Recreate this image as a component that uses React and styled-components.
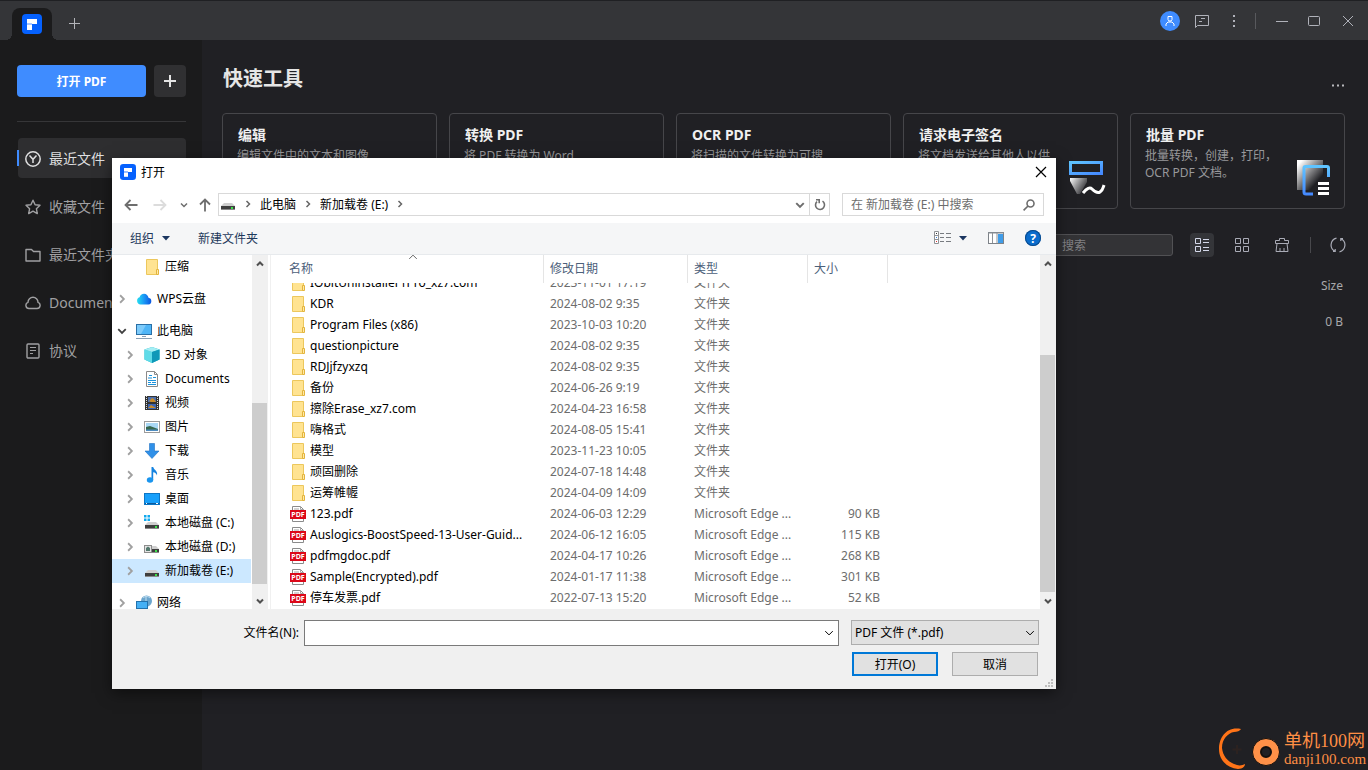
import React, { useLayoutEffect, useRef } from 'react';
import styled, { createGlobalStyle, css } from 'styled-components';

const treeItems = [
  { label: '压缩', icon: 'folder', level: 1, gap: true },
  { label: 'WPS云盘', icon: 'wps', level: 0, arrow: 'right', gap: true },
  { label: '此电脑', icon: 'computer', level: 0, arrow: 'down' },
  { label: '3D 对象', icon: 'cube', level: 1, arrow: 'right' },
  { label: 'Documents', icon: 'doc', level: 1, arrow: 'right' },
  { label: '视频', icon: 'video', level: 1, arrow: 'right' },
  { label: '图片', icon: 'picture', level: 1, arrow: 'right' },
  { label: '下载', icon: 'download', level: 1, arrow: 'right' },
  { label: '音乐', icon: 'music', level: 1, arrow: 'right' },
  { label: '桌面', icon: 'desktop', level: 1, arrow: 'right' },
  { label: '本地磁盘 (C:)', icon: 'driveC', level: 1, arrow: 'right' },
  { label: '本地磁盘 (D:)', icon: 'driveD', level: 1, arrow: 'right' },
  { label: '新加载卷 (E:)', icon: 'drive', level: 1, arrow: 'right', selected: true, gap: true },
  { label: '网络', icon: 'network', level: 0, arrow: 'right' },
];

const files = [
  ['IObitUninstaller1Pro_xz7.com', '2023-11-01 17:19'],
  ['KDR', '2024-08-02 9:35'],
  ['Program Files (x86)', '2023-10-03 10:20'],
  ['questionpicture', '2024-08-02 9:35'],
  ['RDJjfzyxzq', '2024-08-02 9:35'],
  ['备份', '2024-06-26 9:19'],
  ['擦除Erase_xz7.com', '2024-04-23 16:58'],
  ['嗨格式', '2024-08-05 15:41'],
  ['模型', '2023-11-23 10:05'],
  ['顽固删除', '2024-07-18 14:48'],
  ['运筹帷幄', '2024-04-09 14:09'],
  ['123.pdf', '2024-06-03 12:29', '90 KB'],
  ['Auslogics-BoostSpeed-13-User-Guid...', '2024-06-12 16:05', '115 KB'],
  ['pdfmgdoc.pdf', '2024-04-17 10:26', '268 KB'],
  ['Sample(Encrypted).pdf', '2024-01-17 11:38', '301 KB'],
  ['停车发票.pdf', '2022-07-13 15:20', '52 KB'],
];

const menuItems = [
  { label: '最近文件', icon: 'recent', active: true },
  { label: '收藏文件', icon: 'star' },
  { label: '最近文件夹', icon: 'dir' },
  { label: 'Document Cloud', icon: 'cloud' },
  { label: '协议', icon: 'agreement' },
];

const tools = [
  { title: '编辑', text: '编辑文件中的文本和图像' },
  { title: '转换 PDF', text: '将 PDF 转换为 Word Excel PPT 等' },
  { title: 'OCR PDF', text: '将扫描的文件转换为可搜索或可编辑的文本。' },
  { title: '请求电子签名', text: '将文档发送给其他人以供签名。', icon: 'sign' },
  { title: '批量 PDF', text: '批量转换，创建，打印，OCR PDF 文档。', icon: 'batch' },
];

const Logo = ({ size }) => (
  <svg width={size} height={size} viewBox="0 0 20 20" aria-hidden="true">
    <rect width="20" height="20" rx="4" fill="#0561fe" />
    <path d="M5 5h10v5h-5V9H5z" fill="#fff" />
    <path d="M5 9h5v2H5z" fill="#a9c8ff" />
    <path d="M5 11h5v5H5z" fill="#fff" />
  </svg>
);

const Stroke = ({ size = 16, children, width = 1, ...rest }) => (
  <svg width={size} height={size} viewBox={`0 0 ${size} ${size}`} fill="none" stroke="currentColor" strokeWidth={width} aria-hidden="true" {...rest}>
    {children}
  </svg>
);

const Chevron = ({ dir = 'right', size = 8, width = 2 }) => {
  const paths = {
    right: 'M2.5 1l3 3-3 3',
    down: 'M1 2.5l3 3 3-3',
    up: 'M1 5.5l3-3 3 3',
  };
  return (
    <svg width={size} height={size} viewBox="0 0 8 8" fill="none" stroke="currentColor" strokeWidth={(width * 8) / size} aria-hidden="true">
      <path d={paths[dir]} />
    </svg>
  );
};

const Caret = () => (
  <svg width="8" height="5" viewBox="0 0 8 5" aria-hidden="true">
    <path d="M0 0h8L4 4.6z" fill="#1b3660" />
  </svg>
);

const menuIcons = {
  recent: (
    <Stroke width={1.5}>
      <circle cx="8" cy="8" r="7.2" />
      <path d="M4.5 4.5L8 8.3l3.5-3.8M8 8v4" />
    </Stroke>
  ),
  star: (
    <Stroke width={1.4}>
      <path d="M8 1.2l2.1 4.5 4.9.6-3.6 3.4.9 4.9L8 12.2l-4.3 2.4.9-4.9L1 6.3l4.9-.6z" strokeLinejoin="round" />
    </Stroke>
  ),
  dir: (
    <Stroke width={1.4}>
      <path d="M1 2.5h5.500l2 2H15v9.500H1z" strokeLinejoin="round" />
    </Stroke>
  ),
  cloud: (
    <Stroke width={1.4}>
      <path d="M4 13.500h8a3.200 3.200 0 0 0 1-6.200A5 5 0 0 0 3 7.300 3.200 3.200 0 0 0 4 13.500z" />
    </Stroke>
  ),
  agreement: (
    <Stroke width={1.4}>
      <rect x="2" y="1" width="12" height="14" rx="1" />
      <path d="M5 4.500h6M5 7.500h6M5 10.500h3" strokeWidth="1" />
    </Stroke>
  ),
};

const toolIcons = {
  sign: (
    <svg width="38" height="38" viewBox="0 0 38 38" aria-hidden="true">
      <defs>
        <linearGradient id="signFrame" x1="0" y1="0" x2="1" y2="1">
          <stop offset="0" stopColor="#5fc4ff" />
          <stop offset="1" stopColor="#4589ff" />
        </linearGradient>
        <linearGradient id="signPen" x1="0" y1="0" x2="1" y2="0.6">
          <stop offset="0" stopColor="#fff" />
          <stop offset="1" stopColor="#2c2c30" />
        </linearGradient>
      </defs>
      <rect x="2.500" y="3.500" width="31" height="11" fill="none" stroke="url(#signFrame)" strokeWidth="3" />
      <path d="M2 19h17v4l-7 12h-3L2 22z" fill="url(#signPen)" />
      <path d="M15 34c4-5 7-6 9-4s5 5 8 3 3-4 4-7" fill="none" stroke="#fff" strokeWidth="3" />
    </svg>
  ),
  batch: (
    <svg width="38" height="38" viewBox="0 0 38 38" aria-hidden="true">
      <defs>
        <linearGradient id="batchPage" x1="0" y1="0" x2="1" y2="1">
          <stop offset="0.1" stopColor="#fff" />
          <stop offset="0.75" stopColor="#202024" />
        </linearGradient>
        <linearGradient id="batchFrame" x1="0" y1="0" x2="0" y2="1">
          <stop offset="0" stopColor="#5fc4ff" />
          <stop offset="1" stopColor="#4589ff" />
        </linearGradient>
      </defs>
      <path d="M2 1h26v30H2z" fill="url(#batchPage)" />
      <path d="M18 35h-7a2 2 0 0 1-2-2V9a1.500 1.500 0 0 1 1.500-1.500H32A1.500 1.500 0 0 1 33.500 9v9" fill="none" stroke="url(#batchFrame)" strokeWidth="3" />
      <path d="M23 24.500h11M23 29.500h11M23 34.500h11" stroke="#fff" strokeWidth="3" />
    </svg>
  ),
};

const FolderIcon = () => (
  <svg width="16" height="16" viewBox="0 0 16 16" aria-hidden="true">
    <path d="M2.500.5h11v15h-11z" fill="#ffe391" stroke="#ecc75c" />
    <path d="M12.500 15.500v-5h2v5z" fill="#ffe9a8" stroke="#e3b43c" />
  </svg>
);

const PdfIcon = () => (
  <svg width="16" height="16" viewBox="0 0 16 16" aria-hidden="true">
    <path d="M2.500.5h8l3 3v12h-11z" fill="#fff" stroke="#8b8b8b" />
    <path d="M10.500.5v3h3M4 3h5" fill="none" stroke="#a5a5a5" />
    <rect y="4" width="16" height="9" fill="#dc0819" />
    <text x="8" y="11" textAnchor="middle" fontFamily="Open Sans, sans-serif" fontSize="7" fontWeight="700" fill="#fff">PDF</text>
  </svg>
);

const DriveBody = () => (
  <>
    <path d="M4 7h8l3 3H1z" fill="#cfcfcf" />
    <rect x="1" y="10" width="14" height="4" fill="#3f3f3f" />
    <rect x="1" y="13" width="14" height="1" fill="#8a8a8a" />
    <rect x="11" y="11" width="2" height="2" fill="#3be04a" />
  </>
);

const treeIcons = {
  wps: (
    <>
      <defs>
        <linearGradient id="wpsCloud" x1="0" x2="1">
          <stop offset="0" stopColor="#27dff0" />
          <stop offset="0.5" stopColor="#1a96f5" />
          <stop offset="1" stopColor="#0a55e0" />
        </linearGradient>
      </defs>
      <path d="M4.500 13.500A3.700 3.700 0 0 1 3.600 6.300C4.200 4.300 5.800 2.800 8 2.800c2.500 0 4 2 4.500 4a3.400 3.400 0 0 1 0 6.700z" fill="url(#wpsCloud)" />
    </>
  ),
  computer: (
    <>
      <rect x="0.500" y="1.500" width="15" height="10" fill="#4fb5f7" stroke="#2a6fa6" />
      <path d="M1 2h9L5 11H1z" fill="#7dcbfb" />
      <path d="M0 15.500h16M6 13.500h4" stroke="#8aa0b5" />
    </>
  ),
  cube: (
    <>
      <path d="M8 0l7.500 2.500v10L8 16 .500 12.500v-10z" fill="#19b3c8" />
      <path d="M.5 2.500L8 5v11L.5 12.500z" fill="#5fdbe8" />
      <path d="M8 0l7.500 2.500L8 5 .5 2.500z" fill="#a5eef4" />
      <path d="M8 5l7.500-2.500v10L8 16z" fill="#0f98b8" />
    </>
  ),
  doc: (
    <>
      <path d="M2.500.5h8l3 3v12h-11z" fill="#fff" stroke="#8a8a8a" />
      <path d="M10.500.5v3h3" fill="none" stroke="#8a8a8a" />
      <path d="M4 7h4M9 6.500h3M4 9.500h8M4 11.500h3M8 11.500h4M4 13.500h8M5 4.500h3" stroke="#1c93dc" />
    </>
  ),
  video: (
    <>
      <rect x="1" y="1" width="14" height="14" fill="#333" />
      <path d="M2.500 1v14M13.500 1v14" stroke="#ddd" strokeDasharray="1 1" />
      <rect x="4" y="2" width="8" height="5" fill="#4b6fae" />
      <rect x="4" y="9" width="8" height="5" fill="#3b65b5" />
      <path d="M5 6l3-3 2 1 2 3H7zM4 13l3-3 5 3z" fill="#c98b28" />
    </>
  ),
  picture: (
    <>
      <rect x="0.500" y="2.500" width="15" height="11" fill="#fff" stroke="#9b9b9b" />
      <rect x="2" y="4" width="12" height="8" fill="#a9d8f5" />
      <path d="M2 8l4-1 8 3v2H2z" fill="#37684e" />
      <path d="M2 10.500h12V12H2z" fill="#4e8cc0" />
    </>
  ),
  download: <path d="M5.500.5h5V8H15l-7 7.500L1 8h4.500z" fill="#3090e8" stroke="#1f72c4" strokeWidth="0.600" />,
  music: (
    <>
      <path d="M7.500 0h1.700c.6 3.200 4.800 3.400 3.800 8.500C12.500 6.500 11 5.500 9.200 5.300V13H7.500z" fill="#1583e0" />
      <ellipse cx="6" cy="13" rx="3.200" ry="2.700" fill="#1a95ee" />
    </>
  ),
  desktop: (
    <>
      <rect x="0.500" y="2.500" width="15" height="11" fill="#18a0fb" stroke="#0d76c5" />
      <path d="M1 12.500h14" stroke="#0b5a9c" />
      <path d="M2 12.500h1M12 12.500h2" stroke="#fff" />
    </>
  ),
  drive: <DriveBody />,
  driveC: (
    <>
      <DriveBody />
      <path d="M0 0h2.500v2.500H0zM3.500 0H6v2.500H3.500zM0 3.500h2.500V6H0zM3.500 3.500H6V6H3.500z" fill="#10a9ee" />
    </>
  ),
  driveD: (
    <>
      <DriveBody />
      <rect x="0.500" y="6.500" width="7" height="7" fill="#e3e3e3" stroke="#8c8c8c" />
      <path d="M2 12V9l2-1.500L6 9v3z" fill="#54796e" />
    </>
  ),
  network: (
    <>
      <circle cx="10.500" cy="6" r="5.500" fill="#6ba5cd" />
      <path d="M7 3c2-2 5-2 7 0M10 1v9" stroke="#c3e0f2" fill="none" />
      <rect x="0.500" y="6.500" width="11" height="7" fill="#45b0f5" stroke="#2372ad" />
      <path d="M3 15.500h6" stroke="#7c93a8" />
    </>
  ),
};

const TreeIcon = ({ name }) =>
  name === 'folder' ? (
    <FolderIcon />
  ) : (
    <svg width="16" height="16" viewBox="0 0 16 16" aria-hidden="true">
      {treeIcons[name]}
    </svg>
  );

const ScrollBar = ({ before, thumb, after }) => (
  <Scroll $before={before} $thumb={thumb} $after={after}>
    <ScrollArrow aria-label="向上滚动"><Chevron dir="up" /></ScrollArrow>
    <span />
    <ScrollThumb />
    <span />
    <ScrollArrow aria-label="向下滚动"><Chevron dir="down" /></ScrollArrow>
  </Scroll>
);

const FileList = () => {
  const scroller = useRef(null);

  useLayoutEffect(() => {
    scroller.current.scrollTop = scroller.current.scrollHeight;
  }, []);

  return (
    <ListScroller ref={scroller}>
      <FileTable>
        <colgroup>
          <col width="261" />
          <col width="144" />
          <col width="120" />
          <col width="80" />
          <col />
        </colgroup>
        <thead>
          <tr>
            <HeadCell>
              名称
              <SortMark><Chevron dir="up" size={10} width={1} /></SortMark>
            </HeadCell>
            <HeadCell>修改日期</HeadCell>
            <HeadCell>类型</HeadCell>
            <HeadCell>大小</HeadCell>
            <HeadCell as="td" $last />
          </tr>
        </thead>
        <tbody>
          {files.map(([name, date, size]) => (
            <tr key={name}>
              <Cell>
                <FileName>
                  {size ? <PdfIcon /> : <FolderIcon />}
                  {name}
                </FileName>
              </Cell>
              <Cell $muted>{date}</Cell>
              <Cell $muted>{size ? 'Microsoft Edge ...' : '文件夹'}</Cell>
              <Cell $muted $right>{size}</Cell>
              <Cell />
            </tr>
          ))}
        </tbody>
      </FileTable>
    </ListScroller>
  );
};

const OpenDialog = () => (
  <Dialog role="dialog" aria-label="打开">
    <DialogTitle>
      <Logo size={16} />
      <span>打开</span>
      <CloseButton aria-label="关闭">
        <Stroke size={12} width={1.2}><path d="M1 1l10 10M11 1L1 11" /></Stroke>
      </CloseButton>
    </DialogTitle>

    <NavRow>
      <NavButton $w={28} aria-label="后退">
        <Stroke size={14} width={1.8}><path d="M13.500 7H1.500M6.500 2l-5 5 5 5" /></Stroke>
      </NavButton>
      <NavButton $w={30} $dim aria-label="前进">
        <Stroke size={14} width={1.8}><path d="M.5 7h12M7.500 2l5 5-5 5" /></Stroke>
      </NavButton>
      <NavButton $w={18} aria-label="历史"><Chevron dir="down" width={1.5} /></NavButton>
      <NavButton $w={24} aria-label="上移">
        <Stroke size={14} width={1.8}><path d="M7 13.500V1.500M2 6.500l5-5 5 5" /></Stroke>
      </NavButton>
      <Address>
        <Crumbs>
          <TreeIcon name="drive" />
          <Chevron width={1.5} />
          <Crumb>此电脑</Crumb>
          <Chevron width={1.5} />
          <Crumb>新加载卷 (E:)</Crumb>
          <Chevron width={1.5} />
        </Crumbs>
        <AddressButton aria-label="以前的位置"><Chevron dir="down" size={10} width={2} /></AddressButton>
        <AddressButton $line aria-label="刷新">
          <Stroke size={12} width={1.6}><path d="M3 2.600A4.500 4.500 0 1 0 8.500 2.200M2 .8h3.200v3.500" /></Stroke>
        </AddressButton>
      </Address>
      <DialogSearch>
        <input aria-label="搜索" placeholder="在 新加载卷 (E:) 中搜索" />
        <Stroke size={12} width={1.6}><circle cx="7.500" cy="4.500" r="3.500" /><path d="M5 7L.6 11.400" /></Stroke>
      </DialogSearch>
    </NavRow>

    <CommandBar>
      <Command>组织 <Caret /></Command>
      <Command>新建文件夹</Command>
      <CommandIcons>
        <Command aria-label="更改视图">
          <svg width="17" height="14" viewBox="0 0 17 14" aria-hidden="true">
            <path d="M.5.5h4v12h-4zM.5 4.500h4M.5 8.500h4" fill="#fff" stroke="#8f9296" />
            <path d="M2 2.500h1" stroke="#333" />
            <path d="M2 6.500h1" stroke="#2f7fe0" />
            <path d="M2 10.500h1" stroke="#d33" />
            <path d="M6 2.500h4M12 2.500h5M6 6.500h4M12 6.500h5M6 10.500h4M12 10.500h5" stroke="#777b80" />
          </svg>
          <Caret />
        </Command>
        <Command aria-label="预览窗格">
          <svg width="16" height="12" viewBox="0 0 16 12" aria-hidden="true">
            <rect x="0.500" y="0.500" width="15" height="11" fill="#fff" stroke="#7d8288" />
            <path d="M0 1h16M4.500 1v10M9 1v10" stroke="#8d9298" />
            <rect x="10" y="2" width="5" height="9" fill="#3f9ce8" />
          </svg>
        </Command>
        <Help aria-label="帮助">?</Help>
      </CommandIcons>
    </CommandBar>

    <DialogBody>
      <Tree>
        {treeItems.map((item) => (
          <TreeItem key={item.label} $level={item.level} $selected={item.selected} $gap={item.gap}>
            <TreeArrow $open={item.arrow === 'down'}>
              {item.arrow && <Chevron dir={item.arrow} size={10} width={1.8} />}
            </TreeArrow>
            <TreeIcon name={item.icon} />
            <TreeLabel>{item.label}</TreeLabel>
          </TreeItem>
        ))}
      </Tree>
      <ScrollBar before={131} thumb={181} after={8} />
      <FileList />
      <ScrollBar before={83} thumb={237} after={0} />
    </DialogBody>

    <DialogFooter>
      <FooterRow>
        <FieldLabel htmlFor="filename">文件名(N):</FieldLabel>
        <FileInput>
          <input id="filename" type="text" />
          <Chevron dir="down" size={10} width={1} />
        </FileInput>
        <TypeSelect>
          <select aria-label="文件类型" defaultValue="pdf">
            <option value="pdf">PDF 文件 (*.pdf)</option>
          </select>
          <Chevron dir="down" size={10} width={1} />
        </TypeSelect>
      </FooterRow>
      <FooterActions>
        <DialogButton $primary>打开(O)</DialogButton>
        <DialogButton>取消</DialogButton>
      </FooterActions>
      <Grip width="8" height="8" viewBox="0 0 8 8" aria-hidden="true">
        <path d="M6 0h2v2H6zM3 3h2v2H3zM6 3h2v2H6zM0 6h2v2H0zM3 6h2v2H3zM6 6h2v2H6z" fill="#bdbdbd" />
      </Grip>
    </DialogFooter>
  </Dialog>
);

const App = () => (
  <Page>
    <GlobalStyle />
    <TitleBar>
      <Tab aria-label="主页"><Logo size={20} /></Tab>
      <NewTab aria-label="新标签">
        <Stroke size={12}><path d="M0 6.500h11M5.500 1v11" /></Stroke>
      </NewTab>
      <WindowTools>
        <Avatar aria-label="账户">
          <Stroke size={12}>
            <path d="M4 1.500h4v3l-1 1.500H5L4 4.500zM2 11V9l2-2h4l2 2v2" />
          </Stroke>
        </Avatar>
        <WindowButton aria-label="消息">
          <Stroke size={16}>
            <path d="M1.500 14.500v-12h13v10h-11zM5 8.500h3M7 5.500h4" />
          </Stroke>
        </WindowButton>
        <WindowButton aria-label="更多">
          <Stroke size={16} width={2}><path d="M8 2v2M8 7v2M8 12v2" /></Stroke>
        </WindowButton>
        <BarLine />
        <WindowButton aria-label="最小化"><Stroke size={12}><path d="M0 6.500h12" /></Stroke></WindowButton>
        <WindowButton aria-label="最大化"><Stroke size={12}><rect x="0.500" y="1.500" width="11" height="9" rx="1" /></Stroke></WindowButton>
        <WindowButton $wide aria-label="关闭窗口"><Stroke size={12}><path d="M1 1l10 10M11 1L1 11" /></Stroke></WindowButton>
      </WindowTools>
    </TitleBar>

    <Body>
      <Sidebar>
        <SidebarActions>
          <OpenButton>打开 PDF</OpenButton>
          <AddButton aria-label="新建">
            <Stroke size={12} width={2}><path d="M0 6h12M6 0v12" /></Stroke>
          </AddButton>
        </SidebarActions>
        <Menu>
          {menuItems.map((item) => (
            <MenuItem key={item.label} href="#" $active={item.active}>
              {menuIcons[item.icon]}
              {item.label}
            </MenuItem>
          ))}
        </Menu>
      </Sidebar>

      <Main>
        <MainHeader>
          <Heading>快速工具</Heading>
          <MoreButton aria-label="更多工具">
            <svg width="14" height="3" viewBox="0 0 14 3" aria-hidden="true">
              <path d="M1 .5h2v2H1zM6 .5h2v2H6zM11 .5h2v2h-2z" fill="#b8b8bc" />
            </svg>
          </MoreButton>
        </MainHeader>
        <Cards>
          {tools.map((tool) => (
            <Card key={tool.title}>
              <CardTitle>{tool.title}</CardTitle>
              <CardRow>
                <CardText>{tool.text}</CardText>
                {toolIcons[tool.icon]}
              </CardRow>
            </Card>
          ))}
        </Cards>
        <Filters>
          <SearchBox type="text" aria-label="搜索文件" placeholder="搜索" />
          <ViewButton $active aria-label="列表">
            <Stroke size={14}>
              <path d="M.5.5h5v5h-5zM.5 8.500h5v5h-5zM8 1.500h6M8 4.500h6M8 9.500h6M8 12.500h6" />
            </Stroke>
          </ViewButton>
          <ViewButton aria-label="网格">
            <Stroke size={14}>
              <path d="M.5.5h5v5h-5zM.5 8.500h5v5h-5zM8.500.5h5v5h-5zM8.500 8.500h5v5h-5z" />
            </Stroke>
          </ViewButton>
          <ViewButton aria-label="清理">
            <Stroke size={14}>
              <path d="M.5 5.500v-3h4v-2h5v2h4v3zM2 5.500l-1 8h12l-1-8M5 10v3.500M9 10v3.500" />
            </Stroke>
          </ViewButton>
          <FilterLine />
          <ViewButton $narrow aria-label="刷新列表">
            <Stroke size={16} width={1.2}>
              <path d="M6.500 1.200A7 7 0 0 0 5 14.300M9.500 14.800A7 7 0 0 0 11 1.700M5.200 12v2.300H3M10.800 4V1.700H13" />
            </Stroke>
          </ViewButton>
        </Filters>
        <RecentTable>
          <thead><tr><th scope="col">Size</th></tr></thead>
          <tbody><tr><td>0 B</td></tr></tbody>
        </RecentTable>
      </Main>
    </Body>

    <OpenDialog />

    <Watermark>
      <svg width="64" height="44" viewBox="0 0 64 44" aria-hidden="true">
        <path d="M22 3C8 0 0 11 0 23c0 11 8 19 19 20 5 0 7-3 7-5-2 1-5 2-8 1C10 37 4 31 3 22 3 13 9 7 15 6c3 0 6-1 7-3z" fill="#ff7418" />
        <path d="M18 19v9M13.500 23.500h9" stroke="#2c2220" strokeWidth="2" />
        <circle cx="47" cy="26" r="13.500" fill="#ff9148" stroke="#14100e" />
        <circle cx="47" cy="26" r="5" fill="#202024" stroke="#14100e" strokeWidth="2" />
      </svg>
      <WatermarkText>
        <strong>单机100网</strong>
        <span>danji100.com</span>
      </WatermarkText>
    </Watermark>
  </Page>
);

const GlobalStyle = createGlobalStyle`
  * {
    box-sizing: border-box;
  }

  body {
    margin: 0;
    background: #202024;
    font-family: 'Noto Sans', 'Noto Sans CJK SC', sans-serif;
    font-size: 12px;
  }

  button, input, select {
    margin: 0;
    padding: 0;
    border: none;
    background: none;
    color: inherit;
    font: inherit;
  }

  svg {
    flex: none;
    display: block;
  }
`;

const center = css`
  display: flex;
  align-items: center;
  justify-content: center;
`;

const Page = styled.div`
  position: relative;
  display: flex;
  flex-direction: column;
  min-height: 100vh;
  overflow: hidden;
  background: #202024;
  color: #d6d6d8;
`;

const TitleBar = styled.header`
  display: flex;
  align-items: flex-end;
  height: 40px;
  padding: 0 2px 0 12px;
  border-top: 1px solid #1f2023;
  background: #343538;
`;

const Tab = styled.button`
  ${center}
  position: relative;
  width: 40px;
  height: 32px;
  border-radius: 8px 8px 0 0;
  background: #1b1b1c;

  &::before,
  &::after {
    content: '';
    position: absolute;
    bottom: 0;
    width: 6px;
    height: 6px;
  }

  &::before {
    right: 100%;
    background: radial-gradient(circle at 0 0, transparent 6px, #1b1b1c 6px);
  }

  &::after {
    left: 100%;
    background: radial-gradient(circle at 100% 0, transparent 6px, #1b1b1c 6px);
  }
`;

const NewTab = styled.button`
  ${center}
  width: 32px;
  height: 34px;
  margin-left: 7px;
  color: #b4b5ba;
`;

const WindowTools = styled.div`
  display: flex;
  align-items: center;
  align-self: center;
  margin-left: auto;
`;

const Avatar = styled.button`
  ${center}
  width: 20px;
  height: 20px;
  margin-right: 6px;
  border-radius: 50%;
  background: #3f8cff;
  color: #fff;
`;

const WindowButton = styled.button`
  ${center}
  width: ${(p) => (p.$wide ? 36 : 32)}px;
  height: 24px;
  color: #b0b2ba;
`;

const BarLine = styled.span`
  width: 1px;
  height: 16px;
  margin: 0 10px 0 5px;
  background: #58595d;
`;

const Body = styled.div`
  display: flex;
  flex: 1;
`;

const Sidebar = styled.aside`
  flex: none;
  width: 202px;
  padding: 25px 16px 0 17px;
  background: #1b1b1c;
`;

const SidebarActions = styled.div`
  display: flex;
  gap: 8px;
  padding-bottom: 24px;
  border-bottom: 1px solid #363638;
`;

const OpenButton = styled.button`
  flex: 1;
  height: 32px;
  border-radius: 4px;
  background: #3f8cff;
  color: #fff;
  font-weight: 700;
`;

const AddButton = styled.button`
  ${center}
  width: 32px;
  height: 32px;
  border-radius: 4px;
  background: #303032;
  color: #e4e4e4;
`;

const Menu = styled.nav`
  display: grid;
  gap: 8px;
  padding: 16px 0 0 1px;
`;

const MenuItem = styled.a`
  position: relative;
  display: flex;
  align-items: center;
  gap: 8px;
  height: 40px;
  padding: 1px 0 0 7px;
  border-radius: 4px;
  background: ${(p) => (p.$active ? '#2e2e30' : 'transparent')};
  color: ${(p) => (p.$active ? '#dededf' : '#a0a0a2')};
  font-size: 14px;
  line-height: 20px;
  white-space: nowrap;
  text-decoration: none;

  &::before {
    content: '';
    display: ${(p) => (p.$active ? 'block' : 'none')};
    position: absolute;
    left: -1px;
    top: 12px;
    width: 2px;
    height: 16px;
    background: #3f8cff;
  }
`;

const Main = styled.main`
  flex: 1;
  min-width: 0;
  padding: 25px 23px 0 20px;
`;

const MainHeader = styled.div`
  display: flex;
  align-items: center;
  justify-content: space-between;
  height: 28px;
  margin-bottom: 20px;
  padding-left: 1px;
`;

const Heading = styled.h1`
  margin: 0;
  color: #e6e6e6;
  font-size: 20px;
  line-height: 28px;
  font-weight: 700;
`;

const MoreButton = styled.button`
  align-self: flex-end;
  padding: 6px 0;
`;

const Cards = styled.div`
  display: grid;
  grid-template-columns: repeat(5, 1fr);
  gap: 12px;
`;

const Card = styled.article`
  height: 96px;
  padding: 11px 11px 0 14px;
  border: 1px solid #46464a;
  border-radius: 4px;
  overflow: hidden;
`;

const CardTitle = styled.h2`
  margin: 0 0 2px;
  padding-left: 1px;
  color: #f0f0f0;
  font-size: 14px;
  line-height: 20px;
  font-weight: 700;
`;

const CardRow = styled.div`
  display: flex;
  justify-content: space-between;
  gap: 12px;

  svg {
    margin-top: 12px;
  }
`;

const CardText = styled.p`
  width: 136px;
  margin: 0;
  color: #98989b;
  line-height: 17px;
`;

const Filters = styled.div`
  display: flex;
  align-items: center;
  justify-content: flex-end;
  gap: 16px;
  margin-top: 24px;
`;

const SearchBox = styled.input`
  width: 160px;
  height: 22px;
  margin-right: 1px;
  padding-left: 48px;
  border: 1px solid #515154;
  border-radius: 3px;
  background: #333336;

  &::placeholder {
    color: #818184;
  }
`;

const ViewButton = styled.button`
  ${center}
  width: ${(p) => (p.$narrow ? 14 : 24)}px;
  height: 24px;
  margin-left: ${(p) => (p.$narrow ? 4 : 0)}px;
  border-radius: 4px;
  background: ${(p) => (p.$active ? '#343539' : 'transparent')};
  color: ${(p) => (p.$active ? '#d5d9ea' : '#a9abb6')};
`;

const FilterLine = styled.span`
  width: 1px;
  height: 16px;
  background: #48484c;
`;

const RecentTable = styled.table`
  width: 100%;
  margin-top: 10px;
  border-spacing: 0;
  color: #a8a8ab;
  text-align: right;

  th,
  td {
    height: 36px;
    padding: 0 2px;
    font-weight: 400;
  }
`;

const Dialog = styled.section`
  position: absolute;
  left: 112px;
  top: 158px;
  width: 944px;
  background: #fff;
  color: #000;
  box-shadow: 0 4px 14px rgba(0, 0, 0, 0.5);
`;

const DialogTitle = styled.div`
  display: flex;
  align-items: center;
  gap: 5px;
  height: 28px;
  padding: 0 9px 0 8px;
`;

const CloseButton = styled.button`
  margin-left: auto;
`;

const NavRow = styled.div`
  display: flex;
  align-items: center;
  height: 37px;
  padding: 0 12px 0 5px;
`;

const NavButton = styled.button`
  ${center}
  width: ${(p) => p.$w}px;
  height: 24px;
  color: ${(p) => (p.$dim ? '#dcdcdc' : '#6e6e6e')};
`;

const Address = styled.div`
  display: flex;
  flex: 1;
  height: 23px;
  margin: 0 12px 0 1px;
  border: 1px solid #d9d9d9;
`;

const Crumbs = styled.div`
  display: flex;
  flex: 1;
  align-items: center;
  gap: 8px;
  padding: 0 0 2px 1px;
  color: #666;
`;

const Crumb = styled.button`
  color: #000;
`;

const AddressButton = styled.button`
  ${center}
  width: 20px;
  border-left: 1px solid ${(p) => (p.$line ? '#d9d9d9' : 'transparent')};
  color: #6e6e6e;
`;

const DialogSearch = styled.label`
  display: flex;
  align-items: center;
  width: 202px;
  height: 23px;
  padding: 0 8px;
  border: 1px solid #d9d9d9;
  color: #6d6d6d;

  input {
    flex: 1;
    min-width: 0;
  }

  input::placeholder {
    color: #6d6d6d;
  }
`;

const CommandBar = styled.div`
  display: flex;
  align-items: center;
  gap: 28px;
  height: 32px;
  padding: 0 15px 1px 18px;
  border-bottom: 1px solid #e7eaed;
  background: #f5f6f7;
`;

const Command = styled.button`
  display: flex;
  align-items: center;
  gap: 8px;
  color: #1e395b;
`;

const CommandIcons = styled.div`
  display: flex;
  align-items: center;
  gap: 21px;
  margin-left: auto;
`;

const Help = styled.button`
  ${center}
  width: 16px;
  height: 16px;
  border-radius: 50%;
  background: #0a6ccc;
  box-shadow: inset 0 0 0 1px #0a4a8c;
  color: #fff;
  font-weight: 700;
`;

const DialogBody = styled.div`
  display: flex;
  height: 354px;
`;

const Tree = styled.ul`
  flex: none;
  width: 140px;
  margin: 0;
  padding: 0;
  overflow: hidden;
  list-style: none;
`;

const TreeItem = styled.li`
  display: flex;
  align-items: center;
  height: 24px;
  margin: 0 1px ${(p) => (p.$gap ? 8 : 0)}px 0;
  padding-left: ${(p) => (p.$level ? 10 : 2)}px;
  background: ${(p) => (p.$selected ? '#cce8ff' : 'transparent')};
`;

const TreeArrow = styled.span`
  ${center}
  width: 16px;
  margin-right: 6px;
  color: ${(p) => (p.$open ? '#404040' : '#a0a0a0')};
`;

const TreeLabel = styled.span`
  margin-left: 5px;
  padding-bottom: 2px;
  white-space: nowrap;
`;

const Scroll = styled.div`
  display: grid;
  flex: none;
  grid-template-rows: 17px ${(p) => p.$before}fr ${(p) => p.$thumb}fr ${(p) => p.$after}fr 17px;
  width: 16px;
  background: #f0f0f0;
`;

const ScrollArrow = styled.button`
  ${center}
  color: #505050;
`;

const ScrollThumb = styled.span`
  margin-right: 1px;
  background: #cdcdcd;
`;

const ListScroller = styled.div`
  flex: 1;
  min-width: 0;
  margin-left: 2px;
  padding-left: 12px;
  border-left: 1px solid #f0f0f0;
  overflow: hidden;
`;

const FileTable = styled.table`
  width: 100%;
  table-layout: fixed;
  border-spacing: 0;
  padding-bottom: 1px;
`;

const HeadCell = styled.th`
  position: sticky;
  top: 0;
  height: 28px;
  padding: 0 6px 2px;
  border-right: ${(p) => (p.$last ? 'none' : '1px solid #e5e5e5')};
  background: #fff;
  color: #4c607a;
  font-weight: 400;
  text-align: left;
`;

const SortMark = styled.span`
  position: absolute;
  top: -3px;
  left: 50%;
  margin-left: -5px;
  color: #666;
`;

const Cell = styled.td`
  height: 21px;
  padding: 0 8px 0 ${(p) => (p.$muted ? 6 : 7)}px;
  color: ${(p) => (p.$muted ? '#6d6d6d' : '#000')};
  line-height: 20px;
  text-align: ${(p) => (p.$right ? 'right' : 'left')};
  white-space: nowrap;
`;

const FileName = styled.span`
  display: flex;
  align-items: center;
  gap: 4px;
`;

const DialogFooter = styled.div`
  position: relative;
  height: 80px;
  padding-top: 11px;
  background: #f0f0f0;
`;

const FooterRow = styled.div`
  display: flex;
  padding-right: 17px;
`;

const FieldLabel = styled.label`
  width: 187px;
  margin-right: 5px;
  line-height: 25px;
  text-align: right;
`;

const FileInput = styled.div`
  display: flex;
  flex: 1;
  align-items: center;
  height: 26px;
  margin-right: 12px;
  padding: 0 4px;
  border: 1px solid #7a7a7a;
  background: #fff;

  input {
    flex: 1;
    outline: none;
  }
`;

const TypeSelect = styled.div`
  position: relative;
  width: 188px;
  height: 25px;

  select {
    width: 100%;
    height: 100%;
    padding-left: 3px;
    border: 1px solid #adadad;
    background: #e1e1e1;
    appearance: none;
  }

  svg {
    position: absolute;
    top: 8px;
    right: 4px;
    pointer-events: none;
  }
`;

const FooterActions = styled.div`
  display: flex;
  justify-content: flex-end;
  gap: 14px;
  margin-top: 6px;
  padding-right: 18px;
`;

const DialogButton = styled.button`
  width: 86px;
  height: 24px;
  border: ${(p) => (p.$primary ? '2px solid #0078d7' : '1px solid #adadad')};
  background: #e1e1e1;
`;

const Grip = styled.svg`
  position: absolute;
  right: 3px;
  bottom: 2px;
`;

const Watermark = styled.div`
  position: absolute;
  right: 3px;
  bottom: 0;
  display: flex;
  align-items: flex-end;
  gap: 1px;
  color: #ff8f45;
  font-family: 'Liberation Serif', 'Noto Sans CJK SC', serif;
`;

const WatermarkText = styled.div`
  display: flex;
  flex-direction: column;
  width: 81px;
  padding-bottom: 3px;
  white-space: nowrap;

  strong {
    font-size: 18px;
    line-height: 20px;
    font-weight: 400;
  }

  span {
    font-size: 15px;
    line-height: 16px;
  }
`;

export default App;
